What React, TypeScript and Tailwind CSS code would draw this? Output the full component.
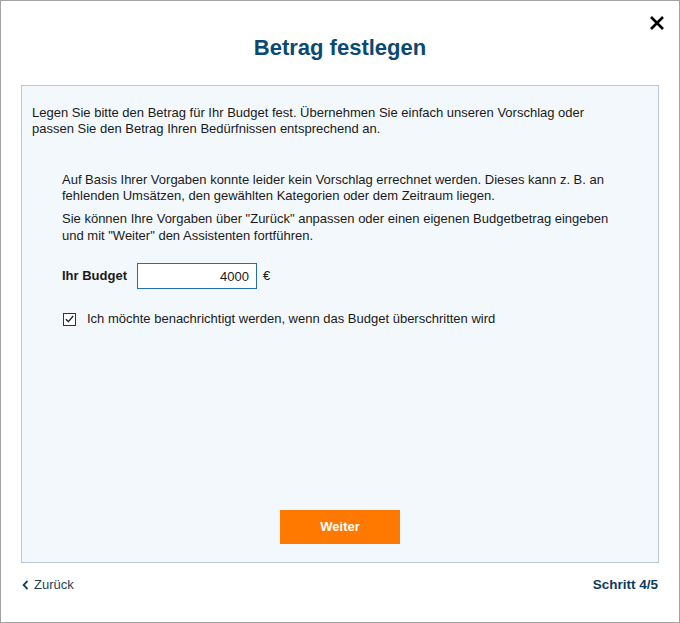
import { useState } from "react";

export default function App() {
  const [budget, setBudget] = useState("4000");
  const [notify, setNotify] = useState(true);

  return (
    <div
      className="flex h-[623px] w-[680px] flex-col border border-[#a3a3a3] bg-white text-[13px] leading-4 text-[#1a1a1a]"
      style={{ fontFamily: '"Liberation Sans", Arial, sans-serif' }}
    >
      <div className="relative flex h-[84px] items-start justify-center pt-[34px]">
        <h1 className="text-[22px] font-bold leading-[26px] text-[#0a4a72]">Betrag festlegen</h1>
        <button className="absolute right-[14px] top-[14px] text-black" aria-label="Schließen">
          <svg width="16" height="16" viewBox="0 0 16 16" fill="none">
            <path d="M2 2 L14 14 M14 2 L2 14" stroke="currentColor" strokeWidth="2.6" />
          </svg>
        </button>
      </div>

      <div className="mx-[20px] flex h-[478px] flex-col border border-[#b9c9d9] bg-[#f3f8fc] px-[10px] pb-[18px] pt-[19px]">
        <p>
          Legen Sie bitte den Betrag für Ihr Budget fest. Übernehmen Sie einfach unseren Vorschlag oder
          <br />
          passen Sie den Betrag Ihren Bedürfnissen entsprechend an.
        </p>

        <div className="mt-[35px] pl-[30px]">
          <p>
            Auf Basis Ihrer Vorgaben konnte leider kein Vorschlag errechnet werden. Dieses kann z. B. an
            <br />
            fehlenden Umsätzen, den gewählten Kategorien oder dem Zeitraum liegen.
          </p>
          <p className="mt-[6px] leading-[17px]">
            Sie können Ihre Vorgaben über "Zurück" anpassen oder einen eigenen Budgetbetrag eingeben
            <br />
            und mit "Weiter" den Assistenten fortführen.
          </p>

          <div className="mt-[19px] flex items-center">
            <label className="w-[75px] font-bold">Ihr Budget</label>
            <input
              value={budget}
              onChange={(e) => setBudget(e.target.value)}
              className="h-[26px] w-[120px] border border-[#1f6fb2] bg-white px-[7px] text-right text-[13px] outline-none"
            />
            <span className="ml-[6px]">€</span>
          </div>

          <label className="mt-[22px] flex items-center">
            <span
              onClick={() => setNotify(!notify)}
              className="ml-[1px] flex h-[13px] w-[13px] items-center justify-center border border-[#333] bg-white"
            >
              {notify && (
                <svg width="9" height="8" viewBox="0 0 9 8" fill="none">
                  <path d="M0.8 4.2 L3.4 6.6 L8.2 1" stroke="#222" strokeWidth="1.4" />
                </svg>
              )}
            </span>
            <span className="ml-[11px]">Ich möchte benachrichtigt werden, wenn das Budget überschritten wird</span>
          </label>
        </div>

        <div className="mt-auto flex justify-center">
          <button className="h-[34px] w-[120px] bg-[#ff7900] text-[13px] font-bold text-white">Weiter</button>
        </div>
      </div>

      <div className="mx-[21px] mt-[14px] flex items-center justify-between">
        <a className="flex items-center gap-[5px] text-[#1c3f5e]">
          <svg width="7" height="10" viewBox="0 0 7 10" fill="none">
            <path d="M5.5 1 L1.6 5 L5.5 9" stroke="currentColor" strokeWidth="1.8" />
          </svg>
          Zurück
        </a>
        <span className="text-[13.5px] font-bold text-[#0d3a5c]">Schritt 4/5</span>
      </div>
    </div>
  );
}
